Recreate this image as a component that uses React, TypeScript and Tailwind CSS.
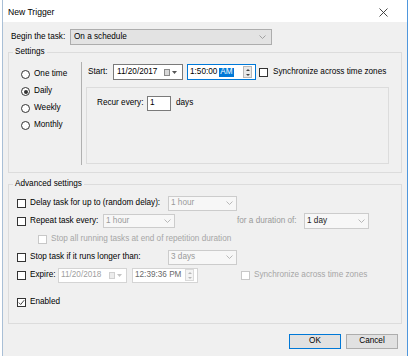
import React from "react";

const Chevron = ({ color = "#7a7a7a" }: { color?: string }) => (
  <svg width="7" height="4" viewBox="0 0 7 4">
    <path d="M0.5 0.5 L3.5 3.5 L6.5 0.5" fill="none" stroke={color} strokeWidth="0.9" />
  </svg>
);

const Check = ({ checked, disabled }: { checked?: boolean; disabled?: boolean }) => (
  <span
    className={`w-[9px] h-[9px] border bg-white flex items-center justify-center shrink-0 ${
      disabled ? "border-[#c8c8c8]" : "border-[#333333]"
    }`}
  >
    {checked && (
      <svg width="7" height="7" viewBox="0 0 7 7">
        <path d="M0.8 3.6 L2.7 5.5 L6.2 1.2" fill="none" stroke="#333" strokeWidth="0.9" />
      </svg>
    )}
  </span>
);

const Radio = ({ on, label }: { on?: boolean; label: string }) => (
  <div className="h-[17px] flex items-center gap-[4px]">
    <span className="w-[9px] h-[9px] rounded-full border border-[#333333] bg-white flex items-center justify-center">
      {on && <span className="w-[4px] h-[4px] rounded-full bg-[#333333]" />}
    </span>
    <span>{label}</span>
  </div>
);

const Select = ({ text, className, dim }: { text: string; className: string; dim?: boolean }) => (
  <div className={`border border-[#cccccc] bg-[#f7f7f7] flex items-center justify-between pl-[2px] pr-[3px] ${className}`}>
    <span className={dim ? "text-[#9a9a9a]" : "text-[#222]"}>{text}</span>
    <Chevron color="#b0b0b0" />
  </div>
);

const CalIcon = ({ light }: { light?: boolean }) => (
  <span className="flex items-center gap-[2px]">
    <span className={`w-[6px] h-[7px] border ${light ? "border-[#d0d0d0] bg-[#ececec]" : "border-[#8a8a8a] bg-[#d8d8d8]"}`} />
    <svg width="5" height="3" viewBox="0 0 5 3">
      <path d="M0 0 L5 0 L2.5 3 Z" fill={light ? "#c4c4c4" : "#555"} />
    </svg>
  </span>
);

const Spinner = ({ light }: { light?: boolean }) => (
  <span className={`w-[9px] h-[12px] border flex flex-col items-center justify-around ${light ? "border-[#dadada] bg-[#f4f4f4]" : "border-[#b8b8b8] bg-[#e8e8e8]"}`}>
    <svg width="4" height="2" viewBox="0 0 4 2"><path d="M0 2 L2 0 L4 2 Z" fill={light ? "#b8b8b8" : "#444"} /></svg>
    <svg width="4" height="2" viewBox="0 0 4 2"><path d="M0 0 L2 2 L4 0 Z" fill={light ? "#b8b8b8" : "#444"} /></svg>
  </span>
);

export default function App() {
  return (
    <div className="w-[410px] h-[356px] bg-white overflow-hidden font-['Liberation_Sans',Arial,sans-serif] text-[8.2px] text-black leading-none">
      <div className="ml-[2px] w-[406px] h-full border-l border-l-[#a9bfd6] border-r border-r-[#4f97dd] flex flex-col">
        {/* title bar */}
        <div className="h-[22px] bg-white flex items-center justify-between pl-[5px] pr-[19px] shrink-0">
          <span className="text-[8.6px] pt-[3px]">New Trigger</span>
          <svg width="9" height="9" viewBox="0 0 9 9" className="mt-[3px]">
            <path d="M0.5 0.5 L8.5 8.5 M8.5 0.5 L0.5 8.5" stroke="#333" strokeWidth="0.9" />
          </svg>
        </div>

        <div className="flex-1 bg-[#f0f0f0] px-[5px] flex flex-col">
          {/* begin the task */}
          <div className="mt-[7px] h-[16px] flex items-center ml-[3px]">
            <span className="w-[59px]">Begin the task:</span>
            <div className="w-[202px] h-[16px] border border-[#adadad] bg-[#e3e3e3] flex items-center justify-between pl-[3px] pr-[5px]">
              <span>On a schedule</span>
              <Chevron color="#9a9a9a" />
            </div>
          </div>

          {/* Settings */}
          <div className="relative mt-[7px] h-[121px] border border-[#dcdcdc] flex">
            <span className="absolute -top-[5px] left-[4px] px-[2px] bg-[#f0f0f0]">Settings</span>
            <div className="w-[72px] pl-[12px] pt-[13px] flex flex-col">
              <Radio label="One time" />
              <Radio on label="Daily" />
              <Radio label="Weekly" />
              <Radio label="Monthly" />
            </div>
            <div className="mt-[9px] w-px h-[103px] bg-[#b0b0b0]" />
            <div className="flex flex-col pl-[4px]">
              <div className="mt-[11px] h-[16px] flex items-center">
                <span className="w-[27px] pl-[2px]">Start:</span>
                <div className="w-[70px] h-[16px] border border-[#7a7a7a] bg-white flex items-center justify-between pl-[3px] pr-[5px]">
                  <span>11/20/2017</span>
                  <CalIcon />
                </div>
                <div className="ml-[4px] w-[69px] h-[16px] border border-[#0078d7] bg-white flex items-center justify-between pl-[2px] pr-[3px]">
                  <span className="flex items-center">
                    1:50:00
                    <span className="ml-[2px] px-[1px] bg-[#0078d7] text-white h-[9px] flex items-center">AM</span>
                  </span>
                  <Spinner />
                </div>
                <span className="ml-[3px]"><Check /></span>
                <span className="ml-[5px]">Synchronize across time zones</span>
              </div>
              <div className="mt-[7px] w-[303px] h-[77px] border border-[#dcdcdc] pl-[10px] pt-[8px]">
                <div className="h-[15px] flex items-center">
                  <span className="w-[50px]">Recur every:</span>
                  <div className="w-[24px] h-[15px] border border-[#7a7a7a] bg-white flex items-center pl-[2px]">1</div>
                  <span className="ml-[5px]">days</span>
                </div>
              </div>
            </div>
          </div>

          {/* Advanced settings */}
          <div className="relative mt-[11px] h-[140px] border border-[#dcdcdc] pl-[8px] pt-[9px] flex flex-col">
            <span className="absolute -top-[5px] left-[4px] px-[2px] bg-[#f0f0f0]">Advanced settings</span>
            <div className="h-[18px] flex items-center">
              <Check />
              <span className="ml-[4px] w-[138px]">Delay task for up to (random delay):</span>
              <Select text="1 hour" dim className="w-[69px] h-[15px]" />
            </div>
            <div className="h-[18px] flex items-center">
              <Check />
              <span className="ml-[4px] w-[73px]">Repeat task every:</span>
              <Select text="1 hour" dim className="w-[72px] h-[14px]" />
              <span className="ml-[62px] w-[67px] text-[#9a9a9a]">for a duration of:</span>
              <Select text="1 day" className="w-[65px] h-[16px]" />
            </div>
            <div className="h-[18px] flex items-center pl-[21px]">
              <Check disabled />
              <span className="ml-[4px] text-[#a6a6a6]">Stop all running tasks at end of repetition duration</span>
            </div>
            <div className="h-[18px] flex items-center">
              <Check />
              <span className="ml-[4px] w-[138px]">Stop task if it runs longer than:</span>
              <Select text="3 days" dim className="w-[69px] h-[15px]" />
            </div>
            <div className="h-[18px] flex items-center">
              <Check />
              <span className="ml-[4px] w-[28px]">Expire:</span>
              <div className="w-[69px] h-[15px] border border-[#d4d4d4] bg-white flex items-center justify-between pl-[2px] pr-[4px] text-[#a0a0a0]">
                <span>11/20/2018</span>
                <CalIcon light />
              </div>
              <div className="ml-[5px] w-[66px] h-[15px] border border-[#d4d4d4] bg-white flex items-center justify-between pl-[2px] pr-[3px] text-[#6a6a6a]">
                <span>12:39:36 PM</span>
                <Spinner light />
              </div>
              <span className="ml-[43px]"><Check disabled /></span>
              <span className="ml-[4px] text-[#a6a6a6]">Synchronize across time zones</span>
            </div>
            <div className="mt-[9px] h-[18px] flex items-center">
              <Check checked />
              <span className="ml-[4px]">Enabled</span>
            </div>
          </div>

          {/* buttons */}
          <div className="mt-[10px] flex justify-end gap-[5px] pr-[4px]">
            <button className="w-[52px] h-[15px] border border-[#0078d7] bg-[#e1e1e1] flex items-center justify-center">OK</button>
            <button className="w-[52px] h-[15px] border border-[#adadad] bg-[#e1e1e1] flex items-center justify-center">Cancel</button>
          </div>
        </div>
      </div>
    </div>
  );
}
